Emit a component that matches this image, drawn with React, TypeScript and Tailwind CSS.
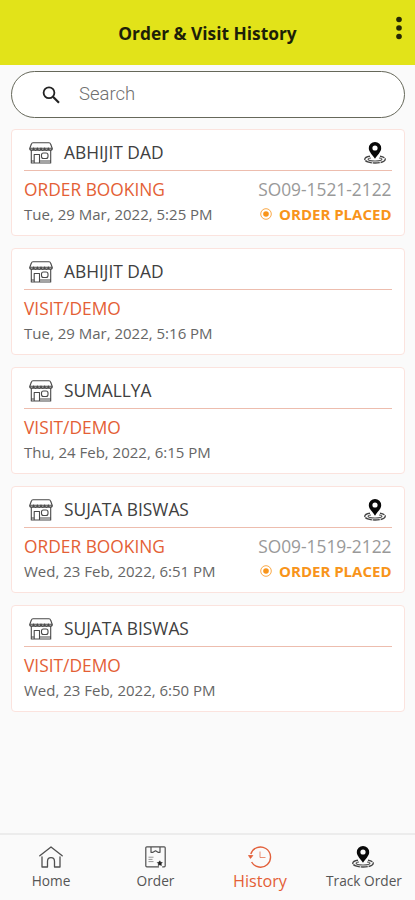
type Entry = {
  name: string;
  type: "ORDER BOOKING" | "VISIT/DEMO";
  date: string;
  orderNo?: string;
};

const ENTRIES: Entry[] = [
  { name: "ABHIJIT DAD", type: "ORDER BOOKING", date: "Tue, 29 Mar, 2022, 5:25 PM", orderNo: "SO09-1521-2122" },
  { name: "ABHIJIT DAD", type: "VISIT/DEMO", date: "Tue, 29 Mar, 2022, 5:16 PM" },
  { name: "SUMALLYA", type: "VISIT/DEMO", date: "Thu, 24 Feb, 2022, 6:15 PM" },
  { name: "SUJATA BISWAS", type: "ORDER BOOKING", date: "Wed, 23 Feb, 2022, 6:51 PM", orderNo: "SO09-1519-2122" },
  { name: "SUJATA BISWAS", type: "VISIT/DEMO", date: "Wed, 23 Feb, 2022, 6:50 PM" },
];

function StoreIcon() {
  return (
    <svg width="24" height="22" viewBox="0 0 24 22" fill="none" stroke="#4a4a4a" strokeWidth="1.1" strokeLinejoin="round">
      <path d="M4 .8h16c1 0 1.400.5 1.700 1.500l1.500 4H.8l1.500-4C2.600 1.300 3 .8 4 .8Z" />
      <path d="M.8 6.300c0 1.400 1 2 1.900 2s1.900-.6 1.900-2c0 1.400 1 2 1.900 2s1.900-.6 1.900-2c0 1.400.9 2 1.800 2s1.800-.6 1.800-2c0 1.400.9 2 1.800 2s1.800-.6 1.800-2c0 1.400 1 2 1.900 2s1.900-.6 1.900-2c0 1.400 1 2 1.900 2s1.900-.6 1.900-2" strokeWidth="1.400" />
      <path d="M2.300 8.500V21h19.400V8.500M2.300 19h2.900M10.500 19h11.200" />
      <path d="M5.200 21v-8.500h5.300V21" />
      <rect x="12.500" y="11" width="6.500" height="5.500" rx="2" />
    </svg>
  );
}

function PinIcon() {
  return (
    <svg width="22" height="22" viewBox="0 0 22 22" fill="none">
      <path d="M6 14.200C2.800 14.600.8 15.800.8 17.300c0 2.200 4.500 3.700 10.200 3.700s10.200-1.500 10.200-3.700c0-1.500-2-2.700-5.200-3.100" stroke="#444" strokeWidth="1.400" strokeDasharray="7 .8" />
      <path d="M7 16c-1.800.2-2.900.7-2.900 1.300 0 1.100 3.100 1.700 6.900 1.700s6.900-.6 6.900-1.700c0-.6-1.100-1.100-2.900-1.300" stroke="#555" strokeWidth="1.200" />
      <path fillRule="evenodd" d="M11 0a6.200 6.200 0 0 0-6.200 6.200c0 4 4.200 6.800 6.200 10.600 2-3.800 6.200-6.600 6.200-10.600A6.200 6.200 0 0 0 11 0Zm0 3.400a2.600 2.600 0 1 1 0 5.200 2.600 2.600 0 0 1 0-5.200Z" fill="#080808" />
    </svg>
  );
}

function HomeIcon() {
  return (
    <svg width="24" height="22" viewBox="0 0 24 22" fill="none" stroke="#505050" strokeWidth="1.300" strokeLinecap="round" strokeLinejoin="round">
      <path d="M.8 9.800 12 1l11.200 8.800" />
      <path d="M3 10.800V21h5.500v-5.500c0-2.400 1.300-3.800 3.500-3.800s3.500 1.400 3.500 3.800V21H21V10.800" />
    </svg>
  );
}

function OrderIcon() {
  return (
    <svg width="21" height="22" viewBox="0 0 21 22" fill="none" stroke="#505050" strokeWidth="1.200" strokeLinejoin="round">
      <path d="M14 20.800H1.800a1 1 0 0 1-1-1v-18a1 1 0 0 1 1-1h17.400a1 1 0 0 1 1 1v18a1 1 0 0 1-1 1h-2" />
      <path d="M6 1v5.300h2l2.500-1.500L13 6.300h2V1" />
      <path d="M3.500 11.200h5M3.500 13.400h4M3.500 15.600h5" strokeWidth=".6" />
      <path d="m14.800 14.800.8 1.500 1.700.3-1.200 1.200.3 1.700-1.600-.8-1.600.8.300-1.700-1.200-1.200 1.700-.3Z" fill="#222" stroke="#222" strokeWidth=".6" />
    </svg>
  );
}

function HistoryIcon() {
  return (
    <svg width="24" height="22" viewBox="0 0 24 22" fill="none" stroke="#e2603b" strokeWidth="1.400">
      <path d="M2.800 8a10.100 10.100 0 1 1 .8 8" />
      <path d="m.5 9.500 2 2.900 2.300-2.900Z" fill="#e2603b" strokeWidth=".8" />
      <path d="M12 5.500v6h5.500" strokeWidth="1" strokeOpacity=".7" />
    </svg>
  );
}

function HistoryCard({ entry }: { entry: Entry }) {
  return (
    <div className="h-[107px] rounded-[4px] border border-[#fbe3de] bg-white pr-[12.500px] pl-3">
      <div className="flex h-[41px] items-center border-b border-[#edbdae] pt-[5px] pr-[5.500px] pl-[5px]">
        <StoreIcon />
        <span className="mb-0.5 ml-[11px] flex-1 text-[17.350px] leading-6 text-[#404040]">{entry.name}</span>
        {entry.orderNo && <PinIcon />}
      </div>
      <div className="flex h-[37px] items-center justify-between text-[17.350px]">
        <span className="text-[#e45f36]">{entry.type}</span>
        {entry.orderNo && <span className="text-[#999]">{entry.orderNo}</span>}
      </div>
      <div className="-mt-1 flex h-5 items-center justify-between text-[15px]">
        <span className="text-[#666]">{entry.date}</span>
        {entry.orderNo && (
          <span className="flex items-center gap-[7px] font-bold text-[#f8941a]">
            <svg width="12" height="12" viewBox="0 0 12 12" fill="none">
              <circle cx="6" cy="6" r="5.300" stroke="#f8941a" strokeOpacity=".8" />
              <circle cx="6" cy="6" r="2.800" fill="#f8941a" />
            </svg>
            ORDER PLACED
          </span>
        )}
      </div>
    </div>
  );
}

export default function App() {
  return (
    <div className="flex h-[900px] w-[415px] flex-col bg-[#fafafa] font-['Open_Sans',sans-serif]">
      <header className="grid h-[65px] shrink-0 grid-cols-[32px_1fr_32px] items-center bg-[#e2e319]">
        <h1 className="col-start-2 pt-0.5 text-center text-[17.350px] font-bold text-[#1d1f08]">Order &amp; Visit History</h1>
        <svg className="mb-2.5 ml-[11px]" width="10" height="26" viewBox="0 0 10 26" fill="#252806">
          <circle cx="5" cy="4.500" r="2.800" />
          <circle cx="5" cy="13" r="2.800" />
          <circle cx="5" cy="21.500" r="2.800" />
        </svg>
      </header>

      <main className="flex-1 pt-1.5 pr-2.5 pl-[11px]">
        <div className="flex h-[47px] items-center rounded-full border border-[#66685a] bg-white pl-[30px]">
          <svg width="18" height="18" viewBox="0 0 18 18" fill="none" stroke="#222" strokeWidth="1.800">
            <circle cx="7" cy="6.800" r="5.400" />
            <path d="m11 10.800 6 6" strokeWidth="2.200" />
          </svg>
          <span className="ml-[19px] font-['Roboto',sans-serif] text-[18.500px] font-light text-[#707070]">Search</span>
        </div>

        <div className="mt-[11px] flex flex-col gap-3">
          {ENTRIES.map((entry, i) => (
            <HistoryCard key={i} entry={entry} />
          ))}
        </div>
      </main>

      {/* Bottom navigation */}
      <nav className="grid h-[67px] shrink-0 grid-cols-[102px_107px_102px_104px] border-t-2 border-[#ececec] pt-[11px] text-[13.700px] text-[#555]">
        <div className="flex flex-col items-center">
          <HomeIcon />
          <span className="mt-[3px] leading-5">Home</span>
        </div>
        <div className="flex flex-col items-center">
          <OrderIcon />
          <span className="mt-[3px] leading-5">Order</span>
        </div>
        <div className="flex flex-col items-center text-[#e45f36]">
          <HistoryIcon />
          <span className="mt-[3px] text-[16.200px] leading-5">History</span>
        </div>
        <div className="flex flex-col items-center">
          <PinIcon />
          <span className="mt-[3px] pl-0.5 leading-5">Track Order</span>
        </div>
      </nav>
    </div>
  );
}
